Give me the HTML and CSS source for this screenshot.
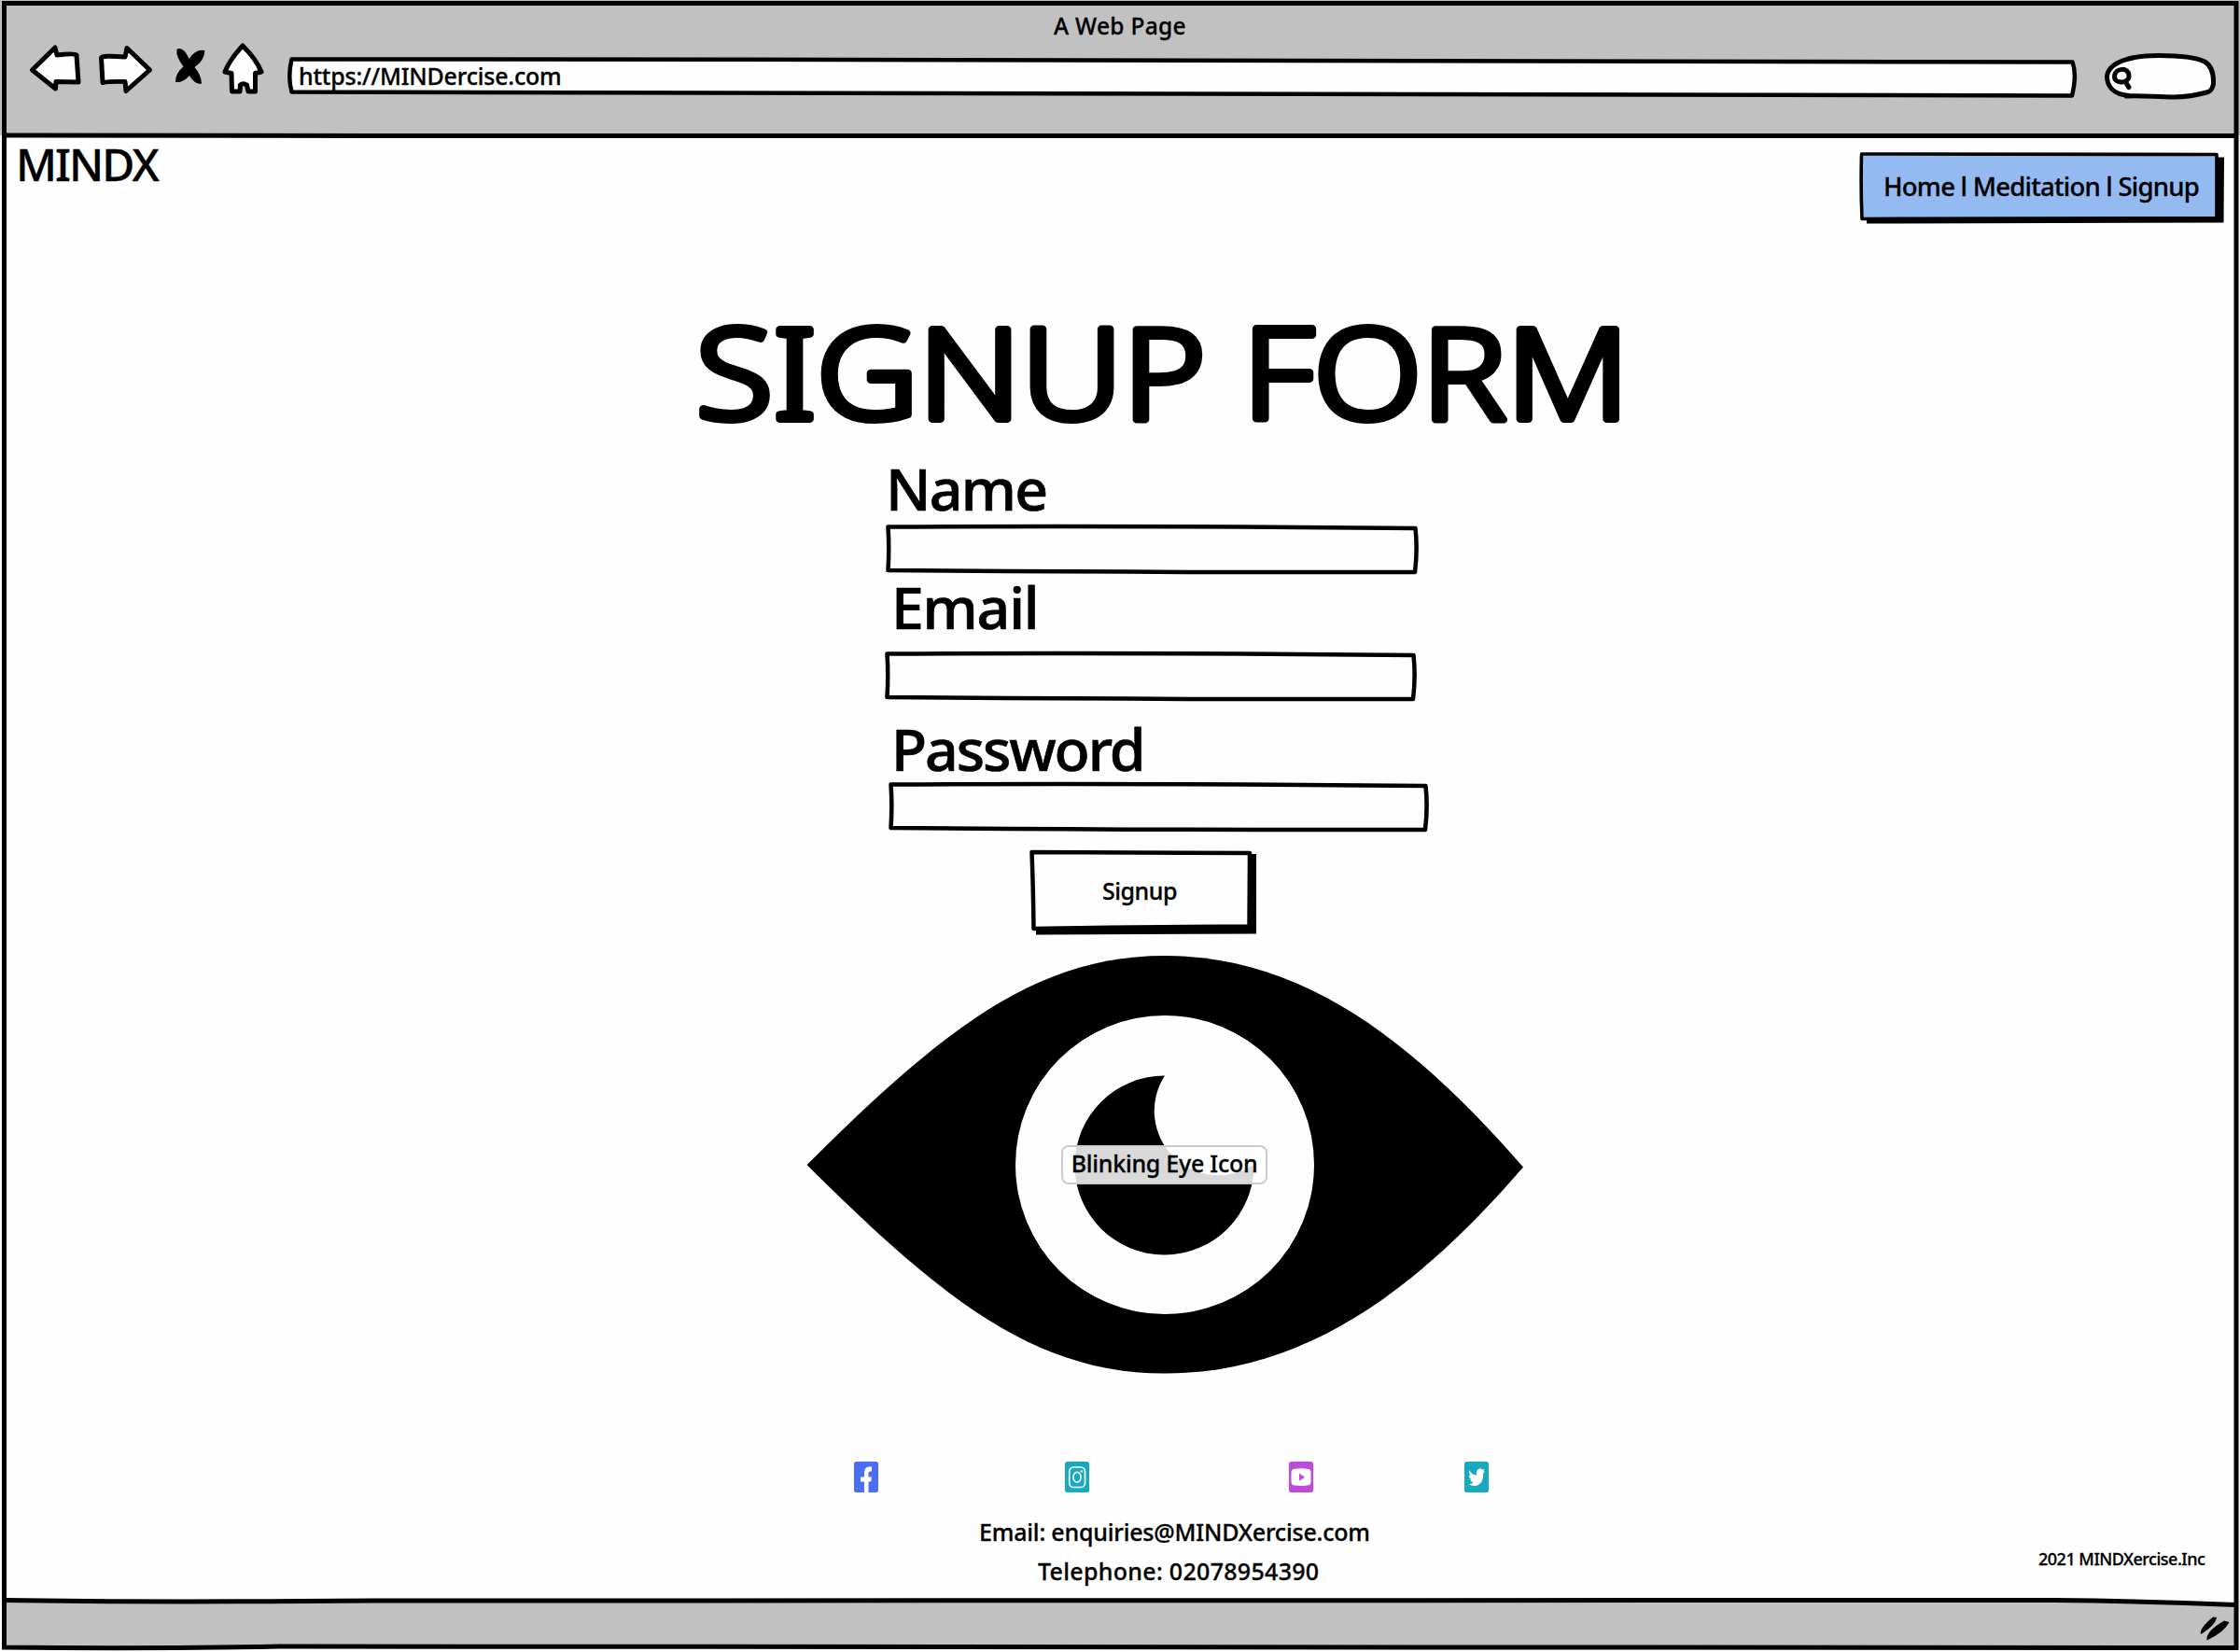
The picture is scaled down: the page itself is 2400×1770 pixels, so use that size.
FILE: index.html
```
<!DOCTYPE html>
<html lang="en">
<head>
<meta charset="utf-8">
<title>A Web Page</title>
<link rel="stylesheet" href="styles.css">
</head>
<body>
<div class="window">
  <header class="chrome">
    <div class="window-title"><span class="t-title">A Web Page</span></div>
    <div class="toolbar">
      <svg class="controls" width="252" height="60" viewBox="32 44 252 60">
        <g class="outline">
          <path d="M34.500 75 L59 51 L61 59 Q80 57 82 59 L84 88 L60 87.500 L59.500 95 Z"/>
          <path d="M108.500 62 Q109 59 134 61 L136 51.500 L160.500 75 L135 97.500 L134 87.500 Q118 87 110 88.500 Z"/>
          <path d="M260 49 Q275 64 280 77 L273.500 78.500 L273.500 98 L266 98 L264.500 91 Q260.500 88.500 257.500 91 L257 98 L248.500 98 L248 78.500 L241 77 Q246 64 260 49 Z"/>
        </g>
        <path class="solid" d="M189.500 52.500 Q197 50 202.500 63 Q210 52 219.500 54 Q219 65 208.500 72 Q215.500 80 216 89.500 Q209 91 203 81 Q196 89 188 88 Q188 78 196.500 71.500 Q188 60 189.500 52.500 Z"/>
      </svg>
      <div class="address">
        <svg class="sketch" width="1918" height="46" viewBox="308 60 1918 46"><path d="M312.500 63.500 C1000 64 1800 64 2220.500 66.500 Q2225.500 80 2220 102.500 C1900 102 1200 100 312.500 98.500 Q308 82 312.500 63.500 Z"/></svg>
        <span class="t-url">https://MINDercise.com</span>
      </div>
      <svg class="search" width="120" height="50" viewBox="2255 57 120 50">
        <path d="M2281 102.500 C2264 101 2257.500 92 2257.500 82 C2259 66 2284 59.500 2313 59.500 C2335 59.500 2352 61 2362 66 C2369 70 2372 78 2371.500 90 Q2370 97 2366 98.500 Q2347 104 2329 104 C2310 104 2295 102 2278 103"/>
        <path d="M2281 81 C2281 72 2266 72 2265.500 82 C2265.500 90 2280 90 2281 82 M2277 87.500 L2281 93.500"/>
      </svg>
    </div>
  </header>

  <main class="page">
    <div class="top">
      <div class="brand"><span class="t-brand">MINDX</span></div>
      <nav class="nav">
        <svg class="sketch" width="391" height="77" viewBox="1992 163 391 77">
          <path class="solid" d="M2000 169 L2383 168.500 L2382.500 238.500 L2000 239.500 Z"/>
          <path class="blue" d="M1994.500 165 Q2060 165.500 2375 165.500 L2375 233.500 L1995 234.500 Q1993.500 200 1994.500 165 Z"/>
        </svg>
        <span class="t-nav">Home l Meditation l Signup</span>
      </nav>
    </div>

    <svg class="heading" width="1010" height="190" viewBox="740 300 1010 190" role="heading" aria-level="1">
      <text x="745.500" y="449" textLength="1000" lengthAdjust="spacingAndGlyphs">SIGNUP FORM</text>
    </svg>

    <form class="form">
      <div class="field name">
        <label for="name"><span class="t-name">Name</span></label>
        <div class="box"><svg class="sketch" viewBox="0 0 570 53" preserveAspectRatio="none"><path d="M2.500 2.500 Q270 1 567.500 4 Q570 27 567 51 Q270 51.500 2.500 49 Q4 25 2.500 2.500 Z"/></svg><input id="name"></div>
      </div>
      <div class="field email">
        <label for="email"><span class="t-email">Email</span></label>
        <div class="box"><svg class="sketch" viewBox="0 0 570 53" preserveAspectRatio="none"><path d="M2.500 2.500 Q270 1 567.500 4 Q570 27 567 51 Q270 51.500 2.500 49 Q4 25 2.500 2.500 Z"/></svg><input id="email"></div>
      </div>
      <div class="field password">
        <label for="password"><span class="t-password">Password</span></label>
        <div class="box"><svg class="sketch" viewBox="0 0 570 53" preserveAspectRatio="none"><path d="M2.500 2.500 Q270 1 567.500 4 Q570 27 567 51 Q270 51.500 2.500 49 Q4 25 2.500 2.500 Z"/></svg><input id="password"></div>
      </div>
      <button class="submit" type="button">
        <svg class="sketch" width="243" height="91" viewBox="1103 911 243 91">
          <path class="solid" d="M1110 916 L1346 915 L1346 1000.500 L1110 1001.500 Z"/>
          <path d="M1105.500 913 L1339 914 L1338.500 992.500 Q1220 993 1107.500 995 Q1107 950 1105.500 913 Z"/>
        </svg>
        <span class="t-submit">Signup</span>
      </button>
    </form>

    <figure class="eye">
      <svg width="768" height="448" viewBox="864 1024 768 448">
        <path d="M864.500 1248 C1010 1103 1110 1024 1248 1024 C1400 1024 1518 1120 1632 1250.500 C1520 1380 1400 1471.500 1248 1471.500 C1110 1471.500 1010 1393 864.500 1248 Z"/>
        <circle class="white" cx="1248" cy="1248" r="160"/>
        <path d="M1248 1152.500 A96 96 0 1 0 1343.500 1248 A69 69 0 0 1 1248 1152.500 Z"/>
      </svg>
      <figcaption><span class="t-eye">Blinking Eye Icon</span></figcaption>
    </figure>

    <div class="social">
      <svg class="facebook" width="26" height="33" viewBox="0 0 26 33"><rect width="26" height="33" rx="2.500"/><path class="cut" d="M11 33V21.500H7V16.500H11V12.500Q11 5.500 16 5.500H19V10.500H17Q15.500 10.500 15.500 12.500V16.500H19L18.300 21.500H15.500V33Z"/></svg>
      <svg class="instagram" width="26" height="33" viewBox="0 0 26 33"><rect width="26" height="33" rx="2.500"/><rect class="ring" x="4.700" y="6" width="16.800" height="21.500" rx="4.500"/><ellipse class="ring" cx="13" cy="16.700" rx="4" ry="5.300"/><circle class="cut" cx="17.800" cy="10.500" r="1.200"/></svg>
      <svg class="youtube" width="26" height="33" viewBox="0 0 26 33"><rect width="26" height="33" rx="2.500"/><path class="cut" d="M5 8Q13 6.500 21 8Q23.500 8.500 23.500 12V21Q23.500 25 21 25.300Q13 26.500 5 25.300Q2.500 25 2.500 21V12Q2.500 8.500 5 8Z"/><path d="M11 12.500L17 16.700L11 20.700Z"/></svg>
      <svg class="twitter" width="26" height="33" viewBox="0 0 26 33"><rect width="26" height="33" rx="2.500"/><path class="cut" d="M5 9Q8.500 14.500 13 14.500Q12.500 7.500 16.800 7.300Q18.500 7.500 19.300 8.700L21.300 7.800L20.500 10.300L22 10L20.200 12.500Q20.500 25.500 10.500 26Q7.500 26 4.500 24Q7.500 24.300 9.300 22.500Q6.800 22 6.200 19.300H7.800Q5 18 5 14.500L6.500 15Q4 12 5 9Z"/></svg>
    </div>

    <footer class="foot">
      <p class="mail"><span class="t-mail">Email: enquiries@MINDXercise.com</span></p>
      <p class="phone"><span class="t-phone">Telephone: 02078954390</span></p>
      <p class="copy"><span class="t-copy">2021 MINDXercise.Inc</span></p>
    </footer>
  </main>

  <div class="statusbar"></div>

  <svg class="frame" width="2400" height="1770" viewBox="0 0 2400 1770">
    <path class="status-fill" d="M4 1715 L2200 1714.500 L2396 1719.500 V1765.500 H300 L4 1765 Z"/>
    <path d="M4.500 3.500 H2396 V1765.500 L300 1764 Q150 1767 4.500 1765 Z"/>
    <path d="M4 145 Q150 146 400 145.500 H2396"/>
    <path d="M4 1714.500 Q150 1717 400 1715 Q1200 1714 2200 1714.500 Q2300 1715.500 2396 1719.500"/>
    <path class="solid" d="M2358 1751 Q2356 1745 2371 1732.500 L2375 1733 Q2374 1741 2358 1751 Z M2364.500 1757.500 Q2363 1748 2383 1736.500 L2388.500 1738 Q2383 1749 2364.500 1757.500 Z"/>
  </svg>
</div>
</body>
</html>
```
FILE: styles.css
```
* { box-sizing: border-box; }
body {
  margin: 0;
  background: #fefefe;
  color: #000;
  font-family: "Noto Sans", "Open Sans", sans-serif;
  font-weight: 500;
  -webkit-text-stroke: .3px #000;
}
p, figure { margin: 0; }
svg { display: block; }
span { white-space: nowrap; }

.window {
  position: relative;
  width: 2400px;
  height: 1770px;
  overflow: hidden;
  display: grid;
  grid-template-rows: 145px 1570px 55px;
}

/* hand-drawn outlines sit underneath the text of their box */
.sketch {
  position: absolute;
  inset: 0;
  width: 100%;
  height: 100%;
  overflow: visible;
  z-index: -1;
}
.sketch path, .outline path, .search path {
  fill: #fefefe;
  stroke: #000;
  stroke-width: 4.5;
  stroke-linejoin: round;
  stroke-linecap: round;
}
.sketch .blue { fill: #94baf2; stroke-width: 3.6; }
.sketch .solid, .solid { fill: #000; stroke: none; }

.frame { position: absolute; inset: 0; pointer-events: none; }
.frame path { fill: none; stroke: #000; stroke-width: 5; }
.frame .solid { fill: #000; stroke: none; }
.frame .status-fill { fill: #c1c1c1; stroke: none; }

.chrome { background: #c1c1c1; display: flex; flex-direction: column; }
.window-title { height: 44px; padding-top: 13px; text-align: center; font-size: 24.5px; line-height: 30px; }
.toolbar { display: flex; align-items: flex-start; padding-left: 32px; }
.address {
  position: relative;
  z-index: 0;
  width: 1918px;
  height: 46px;
  margin: 16px 29px 0 24px;
  padding-left: 12px;
  font-size: 25px;
  line-height: 42px;
}
.search { margin-top: 13px; overflow: visible; }
.outline path, .search path { stroke-width: 5; }

.page { display: flex; flex-direction: column; }
.top { height: 155px; display: flex; justify-content: space-between; }
.brand { padding: 1px 0 0 17px; font-size: 48px; line-height: 60px; }
.nav {
  position: relative;
  z-index: 0;
  width: 391px;
  height: 77px;
  margin: 18px 17px 0 0;
  padding-left: 26px;
  font-size: 27.5px;
  line-height: 73px;
}

.heading { margin-left: 740px; }
.heading text {
  font-size: 135px;
  font-weight: 300;
  stroke: #000;
  stroke-width: 8;
  stroke-linejoin: round;
}

.form { padding: 0 0 0 948px; display: flex; flex-direction: column; }
.field { display: flex; flex-direction: column; font-size: 62.5px; -webkit-text-stroke-width: .7px; }
.field label { height: 64px; line-height: 66px; padding-left: 7px; }
.box { position: relative; z-index: 0; height: 53px; }
.box input { width: 100%; height: 100%; border: 0; padding: 0 12px; background: none; font: inherit; font-size: 25px; }
.name { width: 571px; gap: 8px; padding-left: 1px; }
.name label { padding-left: 0; }
.email { width: 569px; gap: 17px; margin-top: 2px; }
.password { width: 582px; gap: 5px; margin-top: 18px; }
.password .box { margin-left: 4px; }
.submit {
  position: relative;
  z-index: 0;
  width: 243px;
  height: 91px;
  margin: 20px 0 0 155px;
  padding: 0 7px 5px 0;
  border: 0;
  background: none;
  color: #000;
  font: 500 25px/80px "Noto Sans", sans-serif;
}

.eye { position: relative; width: 768px; margin: 22px 0 0 864px; }
.eye .white { fill: #fefefe; }
.eye figcaption {
  position: absolute;
  left: 273px;
  top: 203px;
  width: 221px;
  height: 42px;
  border: 2px solid #ccc;
  border-radius: 8px;
  background: rgba(255, 255, 255, .85);
  text-align: center;
  font-size: 25px;
  line-height: 35px;
}

.social { display: flex; margin: 93.500px 0 0 915px; }
.facebook { fill: #4b6ef5; margin-right: 200px; }
.instagram { fill: #17a9bf; margin-right: 214px; }
.youtube { fill: #bf4bdd; margin-right: 162px; }
.twitter { fill: #17a9bf; }
.cut { fill: #fff; }
.ring { fill: none; stroke: #fff; stroke-width: 1.7; }

.foot {
  display: grid;
  grid-template-columns: 1049px 1fr 216px;
  grid-template-rows: 42px 42px;
  margin-top: 27px;
  font-size: 25px;
  line-height: 30px;
}
.mail { grid-area: 1 / 2; }
.phone { grid-area: 2 / 2; padding-left: 63px; }
.copy { grid-area: 1 / 3 / 3 / 4; padding-top: 32px; font-size: 18px; line-height: 24px; }

/* tracking per label */
.t-title { letter-spacing: .3px; }
.t-url { letter-spacing: -.2px; }
.t-brand { letter-spacing: -2px; }
.t-nav { letter-spacing: -.75px; }
.t-name { letter-spacing: -1.7px; }
.t-email { letter-spacing: -1.2px; }
.t-password { letter-spacing: -2.1px; }
.t-submit { letter-spacing: -.5px; }
.t-eye { letter-spacing: -.25px; }
.t-mail { letter-spacing: -.2px; }
.t-phone { letter-spacing: .3px; }
.t-copy { letter-spacing: -.5px; }
```
